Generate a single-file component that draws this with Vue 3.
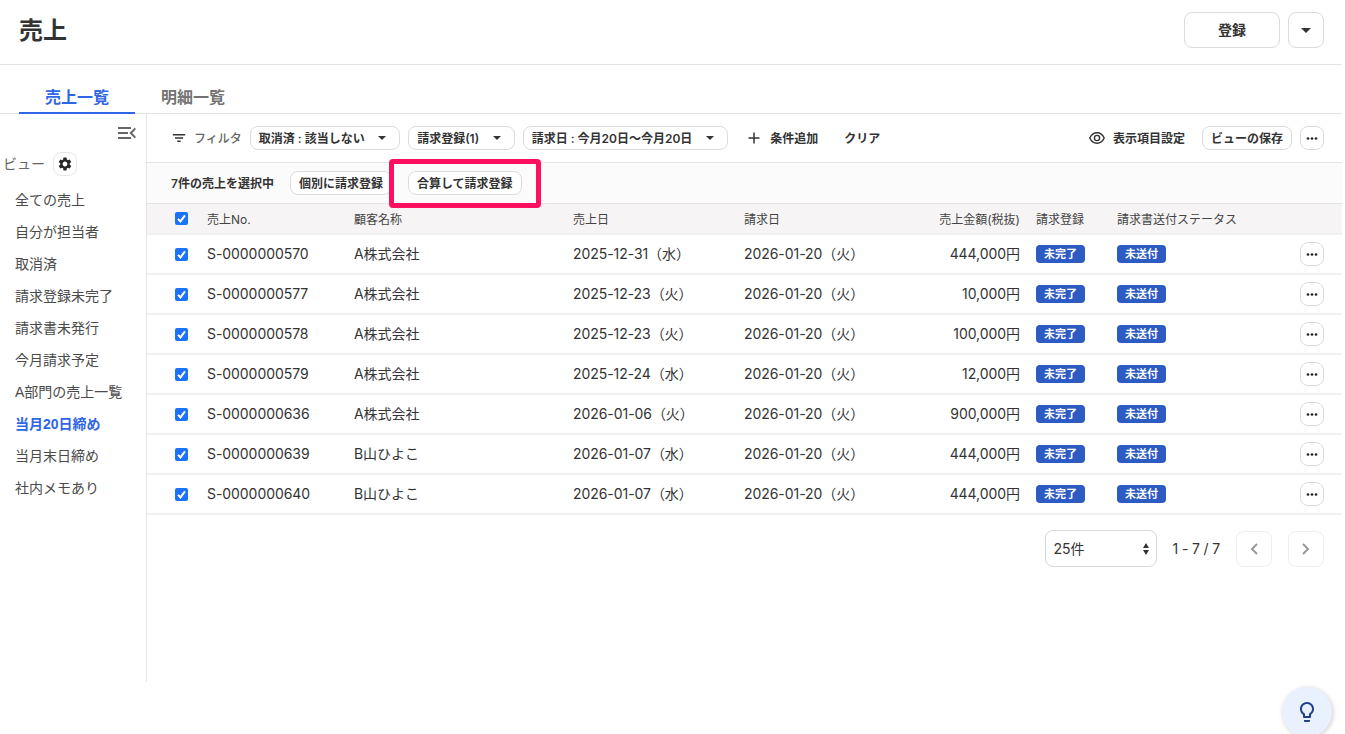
<template>
  <div class="page">
    <header class="page-header">
      <h1>売上</h1>
      <div class="header-actions">
        <button class="btn btn-register">登録</button>
        <button class="btn btn-square" aria-label="その他の登録">
          <svg width="10" height="5" viewBox="0 0 10 5"><path d="M0 0h10L5 5z" fill="currentColor" /></svg>
        </button>
      </div>
    </header>

    <nav class="tabs">
      <a class="tab active">売上一覧</a>
      <a class="tab">明細一覧</a>
    </nav>

    <div class="layout">
      <aside class="sidebar">
        <div class="collapse">
          <svg width="18" height="12" viewBox="0 0 18 12" fill="none" stroke="currentColor" stroke-width="2">
            <path d="M0 1h13M0 6h10M0 11h13M17.3 1.4L12.8 6l4.5 4.6" />
          </svg>
        </div>
        <div class="view-title">
          <span>ビュー</span>
          <button class="btn btn-mini" aria-label="ビュー設定">
            <svg width="16" height="16" viewBox="0 0 24 24" fill="currentColor">
              <path d="M19.14 12.94c.04-.3.06-.61.06-.94 0-.32-.02-.64-.07-.94l2.03-1.58c.18-.14.23-.41.12-.61l-1.92-3.32c-.12-.22-.37-.29-.59-.22l-2.39.96c-.5-.38-1.03-.7-1.62-.94l-.36-2.54c-.04-.24-.24-.41-.48-.41h-3.84c-.24 0-.43.17-.47.41l-.36 2.54c-.59.24-1.13.57-1.62.94l-2.39-.96c-.22-.08-.47 0-.59.22L2.74 8.87c-.12.21-.08.47.12.61l2.03 1.58c-.05.3-.09.63-.09.94s.02.64.07.94l-2.03 1.58c-.18.14-.23.41-.12.61l1.92 3.32c.12.22.37.29.59.22l2.39-.96c.5.38 1.03.7 1.62.94l.36 2.54c.05.24.24.41.48.41h3.84c.24 0 .44-.17.47-.41l.36-2.54c.59-.24 1.13-.56 1.62-.94l2.39.96c.22.08.47 0 .59-.22l1.92-3.32c.12-.22.07-.47-.12-.61l-2.01-1.58zM12 15.6c-1.98 0-3.6-1.62-3.6-3.6s1.62-3.6 3.6-3.6 3.6 1.62 3.6 3.6-1.62 3.6-3.6 3.6z" />
            </svg>
          </button>
        </div>
        <ul class="views">
          <li v-for="view in views" :key="view" :class="{ active: view === currentView }">{{ view }}</li>
        </ul>
      </aside>

      <main class="content">
        <div class="filter-bar">
          <svg class="filter-icon" width="14" height="8" viewBox="0 0 14 8" fill="none" stroke="currentColor" stroke-width="1.4">
            <path d="M.8 .7h12.4M3 4h8M5.3 7.3h3.4" />
          </svg>
          <span class="filter-label">フィルタ</span>
          <button v-for="filter in filters" :key="filter" class="btn chip">
            {{ filter }}
            <svg width="8" height="4" viewBox="0 0 8 4"><path d="M0 0h8L4 4z" fill="currentColor" /></svg>
          </button>
          <a class="link add">
            <svg width="12" height="12" viewBox="0 0 12 12" fill="none" stroke="currentColor" stroke-width="1.5">
              <path d="M6 .5v11M.5 6h11" />
            </svg>
            条件追加
          </a>
          <a class="link">クリア</a>
          <a class="link columns">
            <svg width="16" height="12" viewBox="0 0 16 12" fill="none" stroke="currentColor" stroke-width="1.4">
              <path d="M.8 6C2.2 2.8 4.9 .8 8 .8s5.800 2 7.200 5.200c-1.400 3.200-4.100 5.200-7.200 5.200S2.200 9.200.8 6z" />
              <circle cx="8" cy="6" r="2.600" />
            </svg>
            表示項目設定
          </a>
          <button class="btn chip save">ビューの保存</button>
          <button class="btn btn-mini" aria-label="メニュー">
            <svg width="12" height="3" viewBox="0 0 12 3" fill="currentColor">
              <circle cx="2" cy="1.5" r="1.350" /><circle cx="6" cy="1.5" r="1.350" /><circle cx="10" cy="1.5" r="1.350" />
            </svg>
          </button>
        </div>

        <div class="selection-bar">
          <span class="selection-count">{{ sales.length }}件の売上を選択中</span>
          <button class="btn chip">個別に請求登録</button>
          <div class="highlighted">
            <button class="btn chip">合算して請求登録</button>
            <span class="highlight"></span>
          </div>
        </div>

        <table class="sales">
          <colgroup>
            <col class="c-check" /><col class="c-no" /><col class="c-customer" /><col class="c-date" />
            <col class="c-billing" /><col class="c-amount" /><col class="c-status" /><col class="c-sent" /><col class="c-menu" />
          </colgroup>
          <thead>
            <tr>
              <th><span class="check"><svg width="13" height="13" viewBox="0 0 13 13"><path d="M3 6.900l2.400 2.500L10 3.400" /></svg></span></th>
              <th>売上No.</th>
              <th>顧客名称</th>
              <th>売上日</th>
              <th>請求日</th>
              <th class="right">売上金額(税抜)</th>
              <th>請求登録</th>
              <th>請求書送付ステータス</th>
              <th></th>
            </tr>
          </thead>
          <tbody>
            <tr v-for="sale in sales" :key="sale.no">
              <td><span class="check"><svg width="13" height="13" viewBox="0 0 13 13"><path d="M3 6.900l2.400 2.500L10 3.400" /></svg></span></td>
              <td>{{ sale.no }}</td>
              <td>{{ sale.customer }}</td>
              <td>{{ sale.date }}</td>
              <td>2026-01-20（火）</td>
              <td class="right">{{ sale.amount }}円</td>
              <td><span class="badge">未完了</span></td>
              <td><span class="badge">未送付</span></td>
              <td>
                <button class="btn btn-mini" aria-label="メニュー">
                  <svg width="12" height="3" viewBox="0 0 12 3" fill="currentColor">
                    <circle cx="2" cy="1.5" r="1.350" /><circle cx="6" cy="1.5" r="1.350" /><circle cx="10" cy="1.5" r="1.350" />
                  </svg>
                </button>
              </td>
            </tr>
          </tbody>
        </table>

        <div class="pagination">
          <div class="page-size">
            25件
            <svg width="6" height="12" viewBox="0 0 6 12" fill="currentColor"><path d="M0 5l3-5 3 5zM0 7h6l-3 5z" /></svg>
          </div>
          <span class="page-range">1 - 7 / 7</span>
          <button class="btn btn-square disabled" aria-label="前へ">
            <svg width="8" height="12" viewBox="0 0 8 12"><path d="M7 1L2 6l5 5" /></svg>
          </button>
          <button class="btn btn-square disabled" aria-label="次へ">
            <svg width="8" height="12" viewBox="0 0 8 12"><path d="M1 1l5 5-5 5" /></svg>
          </button>
        </div>
      </main>
    </div>

    <button class="hint" aria-label="ヒント">
      <svg width="24" height="24" viewBox="0 0 24 24" fill="currentColor">
        <path d="M9 21c0 .5.4 1 1 1h4c.6 0 1-.5 1-1v-1H9v1zm3-19C8.100 2 5 5.100 5 9c0 2.400 1.200 4.500 3 5.700V17c0 .5.4 1 1 1h6c.6 0 1-.5 1-1v-2.300c1.800-1.300 3-3.400 3-5.700 0-3.900-3.100-7-7-7zm2.900 11.100l-.9.6V16h-4v-2.300l-.9-.6C7.800 12.200 7 10.600 7 9c0-2.800 2.200-5 5-5s5 2.200 5 5c0 1.600-.8 3.200-2.100 4.100z" />
      </svg>
    </button>
  </div>
</template>

<script setup>
import { ref } from 'vue';

const views = [
  '全ての売上',
  '自分が担当者',
  '取消済',
  '請求登録未完了',
  '請求書未発行',
  '今月請求予定',
  'A部門の売上一覧',
  '当月20日締め',
  '当月末日締め',
  '社内メモあり'
];

const currentView = ref('当月20日締め');

const filters = ['取消済 : 該当しない', '請求登録(1)', '請求日 : 今月20日〜今月20日'];

const sales = ref([
  { no: 'S-0000000570', customer: 'A株式会社', date: '2025-12-31（水）', amount: '444,000' },
  { no: 'S-0000000577', customer: 'A株式会社', date: '2025-12-23（火）', amount: '10,000' },
  { no: 'S-0000000578', customer: 'A株式会社', date: '2025-12-23（火）', amount: '100,000' },
  { no: 'S-0000000579', customer: 'A株式会社', date: '2025-12-24（水）', amount: '12,000' },
  { no: 'S-0000000636', customer: 'A株式会社', date: '2026-01-06（火）', amount: '900,000' },
  { no: 'S-0000000639', customer: 'B山ひよこ', date: '2026-01-07（水）', amount: '444,000' },
  { no: 'S-0000000640', customer: 'B山ひよこ', date: '2026-01-07（水）', amount: '444,000' }
]);
</script>

<style>
body {
  background: #fff;
  overflow: hidden;
}
</style>

<style scoped>
.page {
  width: 1342px;
  height: 734px;
  font-family: Inter, "Noto Sans CJK JP", sans-serif;
  font-size: 14px;
  line-height: 20px;
  color: #333;
}

.page-header {
  display: flex;
  justify-content: space-between;
  align-items: flex-start;
  height: 65px;
  padding: 12px 18px 0 19px;
  border-bottom: 1px solid #e4e4e4;
  box-sizing: border-box;
}

.page-header h1 {
  margin: 1px 0 0;
  font-size: 24px;
  line-height: 36px;
  font-weight: 600;
}

.header-actions {
  display: flex;
  gap: 8px;
}

.btn {
  display: inline-flex;
  align-items: center;
  justify-content: center;
  box-sizing: border-box;
  padding: 0;
  border: 1px solid #dcdcdc;
  border-radius: 8px;
  background: #fff;
  color: #333;
  font-family: inherit;
  font-size: 12px;
  font-weight: 600;
  line-height: 20px;
  white-space: nowrap;
  flex-shrink: 0;
}

.btn-register {
  width: 96px;
  height: 36px;
  font-size: 14px;
}

.btn-square {
  width: 36px;
  height: 36px;
}

.btn-mini {
  width: 24px;
  height: 24px;
  color: #262626;
}

.tabs {
  display: flex;
  height: 49px;
  padding: 15px 0 0 19px;
  border-bottom: 1px solid #e4e4e4;
  box-sizing: border-box;
}

.tab {
  width: 116px;
  height: 34px;
  line-height: 34px;
  box-sizing: border-box;
  text-align: center;
  font-size: 16px;
  font-weight: 600;
  color: #737373;
}

.tab.active {
  color: #2f66e8;
  border-bottom: 2px solid #2f66e8;
}

.layout {
  display: flex;
}

.sidebar {
  width: 147px;
  height: 568px;
  border-right: 1px solid #e4e4e4;
  box-sizing: border-box;
}

.collapse {
  display: flex;
  justify-content: flex-end;
  padding: 13px 10px 0 0;
  color: #666;
}

.view-title {
  display: flex;
  align-items: center;
  gap: 7.5px;
  margin: 13px 0 8px;
  padding-left: 3px;
  color: #666;
}

.view-title .btn {
  border-color: #e6e6e6;
}

.views {
  margin: 0;
  padding: 0 0 0 15px;
  list-style: none;
  font-family: "Liberation Sans", "Noto Sans CJK JP", sans-serif;
}

.views li {
  height: 32px;
  line-height: 32px;
  color: #4a4a4a;
  white-space: nowrap;
}

.views li.active {
  color: #2f66e8;
  font-weight: 600;
}

.content {
  width: 1195px;
}

.filter-bar {
  display: flex;
  align-items: center;
  gap: 8px;
  height: 49px;
  padding: 0 18px 0 25px;
  border-bottom: 1px solid #e4e4e4;
  box-sizing: border-box;
  font-size: 12px;
}

.filter-label {
  padding-top: 2px;
  color: #666;
  font-weight: 500;
}

.chip {
  height: 24px;
  padding: 2px 8px 0;
}

.chip svg {
  margin: -2px 5px 0 13.5px;
}

.link {
  display: flex;
  align-items: center;
  padding-top: 2px;
  font-weight: 600;
}

.link svg {
  margin-top: -2px;
}

.link.add {
  gap: 10px;
  margin: 0 18px 0 12.5px;
}

.link.columns {
  gap: 8px;
  margin-left: auto;
  margin-right: 9px;
}

.selection-bar {
  display: flex;
  align-items: center;
  gap: 16px;
  height: 41px;
  padding-left: 24px;
  border-bottom: 1px solid #e4e4e4;
  box-sizing: border-box;
  background: #fbfbfb;
  font-size: 12px;
  font-weight: 600;
}

.selection-count {
  padding-top: 2px;
}

.highlighted {
  display: flex;
  position: relative;
}

.highlight {
  position: absolute;
  top: -12px;
  right: -19px;
  bottom: -13px;
  left: -19px;
  border: 5px solid #ff0f5f;
  border-radius: 4px;
}

.sales {
  width: 1195px;
  table-layout: fixed;
  border-collapse: separate;
  border-spacing: 0;
}

.c-check { width: 52px; }
.c-no { width: 147px; }
.c-customer { width: 219px; }
.c-date { width: 171px; }
.c-billing { width: 172px; }
.c-amount { width: 120px; }
.c-status { width: 81px; }
.c-sent { width: 183px; }
.c-menu { width: 50px; }

.sales th,
.sales td {
  box-sizing: border-box;
  padding: 0 8px;
  border-bottom: 2px solid #f1f1f1;
  text-align: left;
  vertical-align: middle;
  white-space: nowrap;
}

.sales th {
  height: 31px;
  padding-top: 2px;
  background: #f6f4f5;
  font-size: 12px;
  font-weight: 400;
  color: #444;
}

.sales td {
  height: 40px;
  letter-spacing: -0.06px;
}

.sales th:first-child,
.sales td:first-child {
  padding-top: 0;
  padding-left: 28px;
}

.sales .right {
  text-align: right;
}

.sales .btn {
  display: flex;
}

.check {
  display: block;
  width: 13px;
  height: 13px;
  border-radius: 2px;
  background: #1a73f8;
}

.check svg {
  display: block;
  fill: none;
  stroke: #fff;
  stroke-width: 2;
}

.badge {
  display: block;
  width: 49px;
  height: 18px;
  line-height: 18px;
  border-radius: 4px;
  background: #2d5bc4;
  color: #fff;
  font-size: 11px;
  font-weight: 600;
  letter-spacing: 0;
  text-align: center;
}

.pagination {
  display: flex;
  align-items: center;
  justify-content: flex-end;
  gap: 16px;
  padding: 15px 18px 0 0;
}

.page-size {
  display: flex;
  align-items: center;
  justify-content: space-between;
  width: 112px;
  height: 37px;
  padding: 0 7px 0 8px;
  border: 1px solid #d8d8d8;
  border-radius: 8px;
  box-sizing: border-box;
}

.page-range {
  letter-spacing: -0.15px;
}

.disabled {
  border-color: #ededed;
}

.disabled svg {
  fill: none;
  stroke: #999;
  stroke-width: 2;
}

.hint {
  position: fixed;
  left: 1282px;
  top: 687px;
  display: flex;
  align-items: center;
  justify-content: center;
  width: 50px;
  height: 50px;
  padding: 0;
  border: none;
  border-radius: 50%;
  background: #e9f1fe;
  color: #23408e;
  box-shadow: 1px 1px 5px rgba(0, 0, 0, 0.2);
}
</style>
